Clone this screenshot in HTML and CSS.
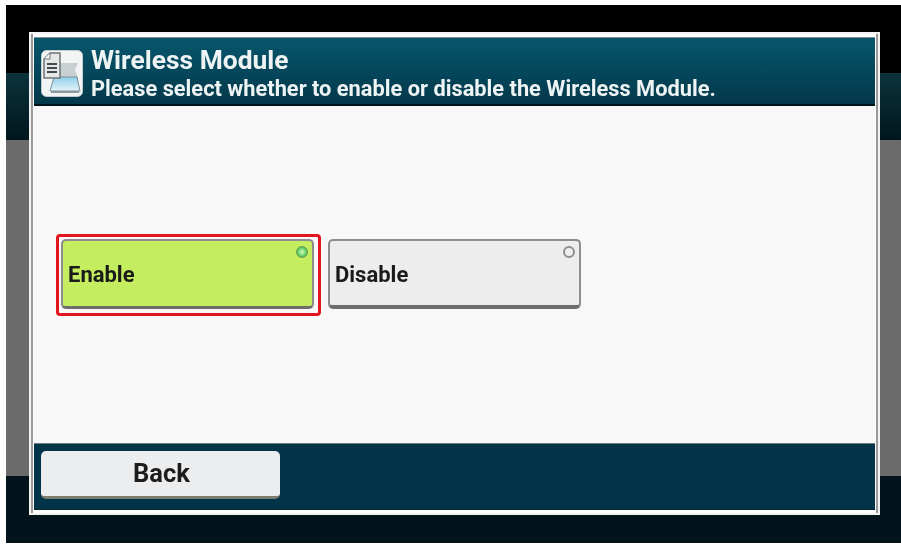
FILE: index.html
```
<!DOCTYPE html>
<html lang="en">
<head>
<meta charset="utf-8">
<title>Wireless Module</title>
<link rel="stylesheet" href="styles.css">
</head>
<body>
<div class="screen">
  <div class="band band-black"></div>
  <div class="band band-teal"></div>
  <div class="band band-gray"></div>
  <div class="band band-bottom"></div>
  <section class="dialog">
    <header class="head">
      <svg class="head-icon" viewBox="0 0 42 47" aria-hidden="true">
        <defs>
          <linearGradient id="tray" x1="0" y1="0" x2="0" y2="1">
            <stop offset="0" stop-color="#8fd0ea"/>
            <stop offset="1" stop-color="#e4f3f8"/>
          </linearGradient>
        </defs>
        <rect x="0.5" y="0.5" width="41" height="46" rx="5" fill="#f3f5f4" stroke="#c3ccce"/>
        <path d="M19 13H37L34 20L37 27H19Z" fill="#c9d0d1"/>
        <path d="M13 27H36L39 41H9Z" fill="url(#tray)" stroke="#7d9096"/>
        <path d="M10 42H38" stroke="#8b9a9e" stroke-width="2" fill="none"/>
        <path d="M3 9L9 3H19V28H3Z" fill="#e6e8e8" stroke="#6f7678" stroke-width="1.5"/>
        <path d="M9 3V9H3" fill="#fafafa" stroke="#6f7678"/>
        <path d="M6 14H16M6 18H16M6 22H16" stroke="#45494b" stroke-width="2" fill="none"/>
      </svg>
      <div class="head-text">
        <h1 class="title">Wireless Module</h1>
        <p class="sub">Please select whether to enable or disable the Wireless Module.</p>
      </div>
    </header>
    <main class="body">
      <div class="focus">
        <button class="opt opt-on" type="button">Enable<span class="led led-on"></span></button>
      </div>
      <button class="opt opt-off" type="button">Disable<span class="led led-off"></span></button>
    </main>
    <footer class="foot">
      <button class="back" type="button">Back</button>
    </footer>
  </section>
</div>
</body>
</html>
```
FILE: styles.css
```
* { box-sizing: border-box; }
html, body { margin: 0; background: #fff; }
body { width: 901px; height: 545px; overflow: hidden; padding: 5px 0 2px 6px; font-family: Roboto, "Liberation Sans", sans-serif; }
.screen { position: relative; height: 538px; display: flex; flex-direction: column; filter: blur(0.6px); }
.band-black { height: 68px; background: #000; }
.band-teal { height: 67px; background: linear-gradient(#0c333d, #01161d); }
.band-gray { height: 336px; background: #6b6b6b; }
.band-bottom { height: 67px; background: #02131b; }
.dialog { position: absolute; left: 23px; top: 27px; width: 851px; height: 483px; background: #fff; border: 2px solid #f2f2f2; padding: 3px; display: flex; flex-direction: column; box-shadow: inset 2px 0 0 #9a9a9a, inset -2px 0 0 #9a9a9a; }
.head { height: 69px; flex: none; display: flex; align-items: center; gap: 8px; padding: 0 0 0 7px; color: #eef3f4; background: linear-gradient(#07566c, #03384a); border-top: 1px solid #7f9097; border-bottom: 2px solid #02141b; }
.head-icon { width: 42px; height: 47px; flex: none; margin-top: 4px; }
.head-text { min-width: 0; margin-top: 6px; }
.title { margin: 0; font-size: 26.4px; line-height: 28px; font-weight: 700; }
.sub { margin: 2px 0 0; font-size: 21.8px; line-height: 26px; font-weight: 700; white-space: nowrap; }
.body { flex: 1; background: #f8f8f8; display: flex; align-items: flex-start; gap: 7px; padding: 128px 0 0 22px; }
.focus { border: 3px solid #e3151f; border-radius: 4px; padding: 2px; display: flex; width: 265px; height: 82px; background: #f8f8f8; }
.opt { position: relative; width: 253px; height: 70px; margin: 0; padding: 2px 0 0 5px; border: 2px solid #8d8d8d; border-bottom: 4px solid #6d6d6d; border-radius: 5px; font: 700 22px Roboto, sans-serif; color: #1a1a1a; text-align: left; }
.opt-on { flex: none; background: #c4ee60; border-bottom-width: 3px; }
.opt-off { margin-top: 5px; background: #ededed; }
.led { position: absolute; top: 5px; right: 4px; width: 12px; height: 12px; border-radius: 50%; }
.led-on { background: radial-gradient(circle, #b9f3a5 15%, #3ec04a 75%); border: 1px solid #6d9b55; }
.led-off { background: #ededed; border: 2px solid #8e8e8e; }
.foot { height: 67px; flex: none; background: #023449; border-top: 1px solid #6d7d84; padding: 7px 0 0 7px; border-bottom: 1px solid #022632; }
.back { display: block; width: 239px; height: 48px; padding: 0 0 2px 2px; border: 0; border-bottom: 3px solid #7b7b70; border-radius: 5px; background: #ecedee; font: 700 25.5px Roboto, sans-serif; color: #1c1c1c; }
```
